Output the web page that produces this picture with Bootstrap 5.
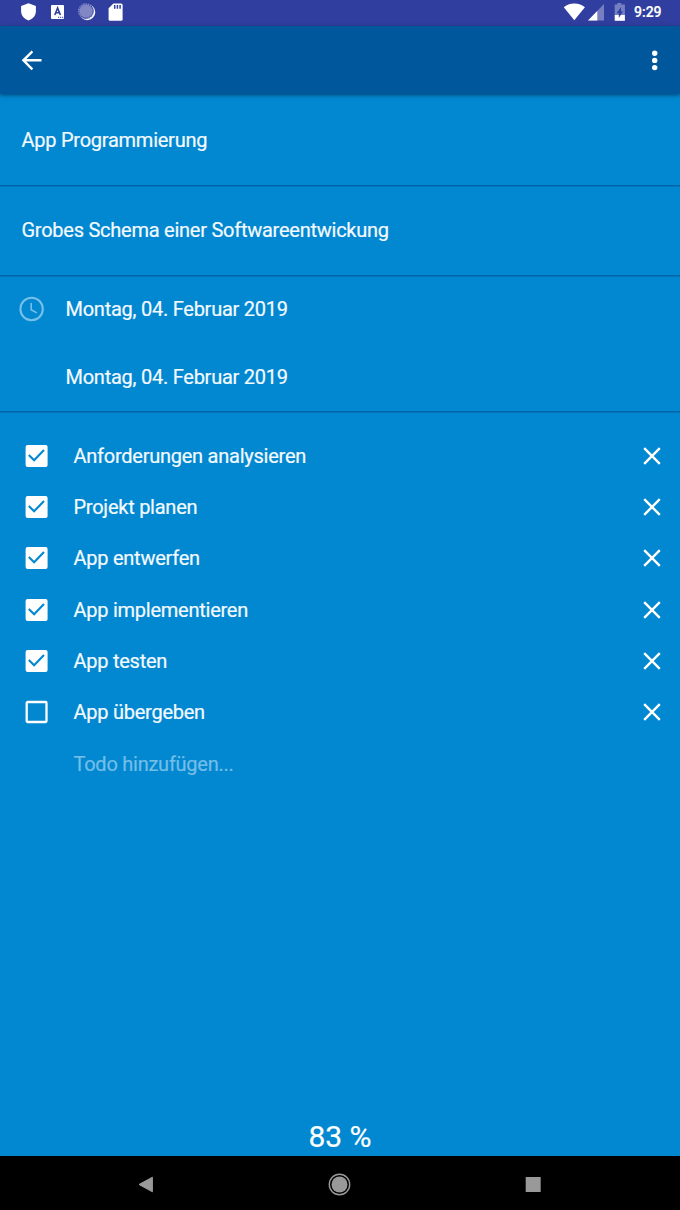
<!DOCTYPE html>
<html lang="de">
<head>
<meta charset="utf-8">
<meta name="viewport" content="width=device-width, initial-scale=1">
<title>App Programmierung</title>
<link href="https://cdn.jsdelivr.net/npm/bootstrap@5.3.0/dist/css/bootstrap.min.css" rel="stylesheet">
<style>
body{font-family:Roboto,"Liberation Sans",sans-serif;font-size:20px;line-height:24px;letter-spacing:-.25px;-webkit-text-stroke:.2px;color:#f4faff;background:#0288d1}
svg{display:block;flex:none}
.screen{width:680px;height:1210px;background:#0288d1}
.statusbar{height:26px;background:#303f9f}
.clock-text{font-size:14px;font-weight:500;letter-spacing:0;width:29px;margin-left:9px;line-height:25px;color:#fff}
.appbar{height:68px;background:#01579b;box-shadow:0 1px 4px rgba(0,30,60,.65);z-index:1}
.rule{border-bottom:1px solid #0262a6;box-shadow:0 1px 0 #0277bd}
.field{padding-left:21.5px}
.f-title{height:92px}
.f-desc{height:90px;padding-bottom:2px}
.f-dates{height:136px}
.date-row{height:68px;padding:0 0 3px 19px}
.date-row span{margin-left:21.5px}
.todos{padding:18px 0 0 25px}
.todo{height:51.35px;padding-right:19.5px}
.todo span{margin-left:25.5px}
.hint{color:#74bee8}
.progress-text{font-size:30px;line-height:37px;padding-bottom:1px;letter-spacing:0;color:#fff}
.navkeys{height:54px;background:#000}
</style>
</head>
<body>
<div class="screen d-flex flex-column overflow-hidden">
  <div class="statusbar">
    <div class="d-flex align-items-start">
      <svg width="140" height="26" viewBox="0 0 140 26">
        <path fill="#fff" d="M28.5 3.2l7.4 2.9v5.2c0 4.3-3.1 7.8-7.4 9.2-4.3-1.4-7.4-4.9-7.4-9.2V6.1z"/>
        <rect x="51" y="5" width="13" height="14" rx="1" fill="#fff"/>
        <path fill="none" stroke="#303f9f" stroke-width="1.6" d="M54.8 15l2.8-7 2.8 7M55.7 12.8h3.8"/>
        <path stroke="#303f9f" stroke-width="1" stroke-dasharray="1.2 .8" d="M58 17.3h5.6"/>
        <circle cx="87.2" cy="12.2" r="8" fill="#fff"/>
        <circle cx="85.8" cy="11" r="7.9" fill="#303f9f"/>
        <circle cx="86" cy="11.2" r="6.6" fill="#8087c4"/>
        <circle cx="86" cy="11.2" r="7.3" fill="none" stroke="#8087c4" stroke-width="1.4" stroke-dasharray="1.6 .8"/>
        <path fill="#fff" d="M113.4 3.4h7.7q1.5 0 1.5 1.5v14.3q0 1.5-1.5 1.5h-11q-1.5 0-1.5-1.5V8.2z"/>
        <path stroke="#303f9f" stroke-width="1.5" d="M114.7 5v3.7M117.4 5v3.7M120.1 5v3.7"/>
      </svg>
      <svg class="ms-auto" width="66" height="26" viewBox="-1 0 66 26">
        <path fill="#fff" d="M14.3 20.2L3.8 7.2C6.3 4.8 10 3.4 14.3 3.4s8 1.4 10.6 3.8z"/>
        <path fill="#757fc2" d="M44 4v16.5H28z"/><path fill="#fff" d="M37.3 11v9.5H28z"/>
        <path fill="#757fc2" d="M57.3 3h4v1.6h3.6v11H54.7v-11h2.6z"/><path fill="#fff" d="M54.7 15h10.2v5.8H54.7z"/>
        <path fill="#303f9f" d="M61 7v4.2h2L58.8 18v-4.8h-2.2z"/>
      </svg>
      <div class="clock-text text-nowrap">9:29</div><div style="width:17px"></div>
    </div>
  </div>
  <header class="appbar d-flex align-items-center justify-content-between position-relative">
    <svg width="60" height="68" viewBox="0 0 60 68" fill="none" stroke="#fff" stroke-width="2.4"><path d="M41.5 34.3H24M32.4 25.3l-9 9 9 9"/></svg>
    <svg width="50" height="68" viewBox="0 0 50 68" fill="#fff"><circle cx="24.7" cy="27.2" r="2.7"/><circle cx="24.7" cy="34.4" r="2.7"/><circle cx="24.7" cy="41.6" r="2.7"/></svg>
  </header>
  <section class="rule field f-title d-flex align-items-center">App Programmierung</section>
  <section class="rule field f-desc d-flex align-items-center">Grobes Schema einer Softwareentwickung</section>
  <section class="rule f-dates">
    <div class="date-row d-flex align-items-center">
      <svg width="25" height="26" viewBox="0 0 25 26" fill="none" stroke="#79c0e8"><circle cx="12.6" cy="13" r="11.2" stroke-width="2.1"/><path stroke-width="1.6" d="M12.2 7v6.8l5.6 3.1"/></svg>
      <span>Montag, 04. Februar 2019</span>
    </div>
    <div class="date-row d-flex align-items-center"><span style="margin-left:46.5px">Montag, 04. Februar 2019</span></div>
  </section>
  <svg width="0" height="0" class="position-absolute">
    <symbol id="on" viewBox="0 0 23 24"><rect x=".6" y=".9" width="22" height="22.2" rx="2" fill="#fff"/><path d="M3.8 11l5.3 5.3L19 6" fill="none" stroke="#0288d1" stroke-width="2.1"/></symbol>
    <symbol id="off" viewBox="0 0 23 24"><rect x="1.7" y="2" width="19.8" height="20" rx="1" fill="none" stroke="#fff" stroke-width="2.3"/></symbol>
    <symbol id="cross" viewBox="0 0 18 18"><path d="M1.2 1.2l15.6 15.6M16.8 1.2L1.2 16.8" stroke="#fff" stroke-width="2.4"/></symbol>
  </svg>
  <main class="todos flex-grow-1">
    <div class="todo d-flex align-items-center"><svg width="23" height="24"><use href="#on"/></svg><span>Anforderungen analysieren</span><svg class="ms-auto" width="18" height="18"><use href="#cross"/></svg></div>
    <div class="todo d-flex align-items-center"><svg width="23" height="24"><use href="#on"/></svg><span>Projekt planen</span><svg class="ms-auto" width="18" height="18"><use href="#cross"/></svg></div>
    <div class="todo d-flex align-items-center"><svg width="23" height="24"><use href="#on"/></svg><span>App entwerfen</span><svg class="ms-auto" width="18" height="18"><use href="#cross"/></svg></div>
    <div class="todo d-flex align-items-center"><svg width="23" height="24"><use href="#on"/></svg><span>App implementieren</span><svg class="ms-auto" width="18" height="18"><use href="#cross"/></svg></div>
    <div class="todo d-flex align-items-center"><svg width="23" height="24"><use href="#on"/></svg><span>App testen</span><svg class="ms-auto" width="18" height="18"><use href="#cross"/></svg></div>
    <div class="todo d-flex align-items-center"><svg width="23" height="24"><use href="#off"/></svg><span>App übergeben</span><svg class="ms-auto" width="18" height="18"><use href="#cross"/></svg></div>
    <div class="todo d-flex align-items-center hint"><span style="margin-left:48.5px">Todo hinzufügen...</span></div>
  </main>
  <div class="progress-text text-center">83 %</div>
  <nav class="navkeys d-flex align-items-center">
    <svg width="680" height="54" viewBox="0 0 680 54">
      <path fill="#999" stroke="#999" stroke-linejoin="round" d="M152.4 21.2v14.6L139 28.5z"/>
      <circle cx="339.5" cy="28.5" r="10.2" fill="none" stroke="#999" stroke-width="1.4"/><circle cx="339.5" cy="28.5" r="8" fill="#999"/>
      <rect x="525.7" y="21" width="15" height="15" rx=".5" fill="#999"/>
    </svg>
  </nav>
</div>
<script src="https://cdn.jsdelivr.net/npm/bootstrap@5.3.0/dist/js/bootstrap.bundle.min.js"></script>
</body>
</html>
